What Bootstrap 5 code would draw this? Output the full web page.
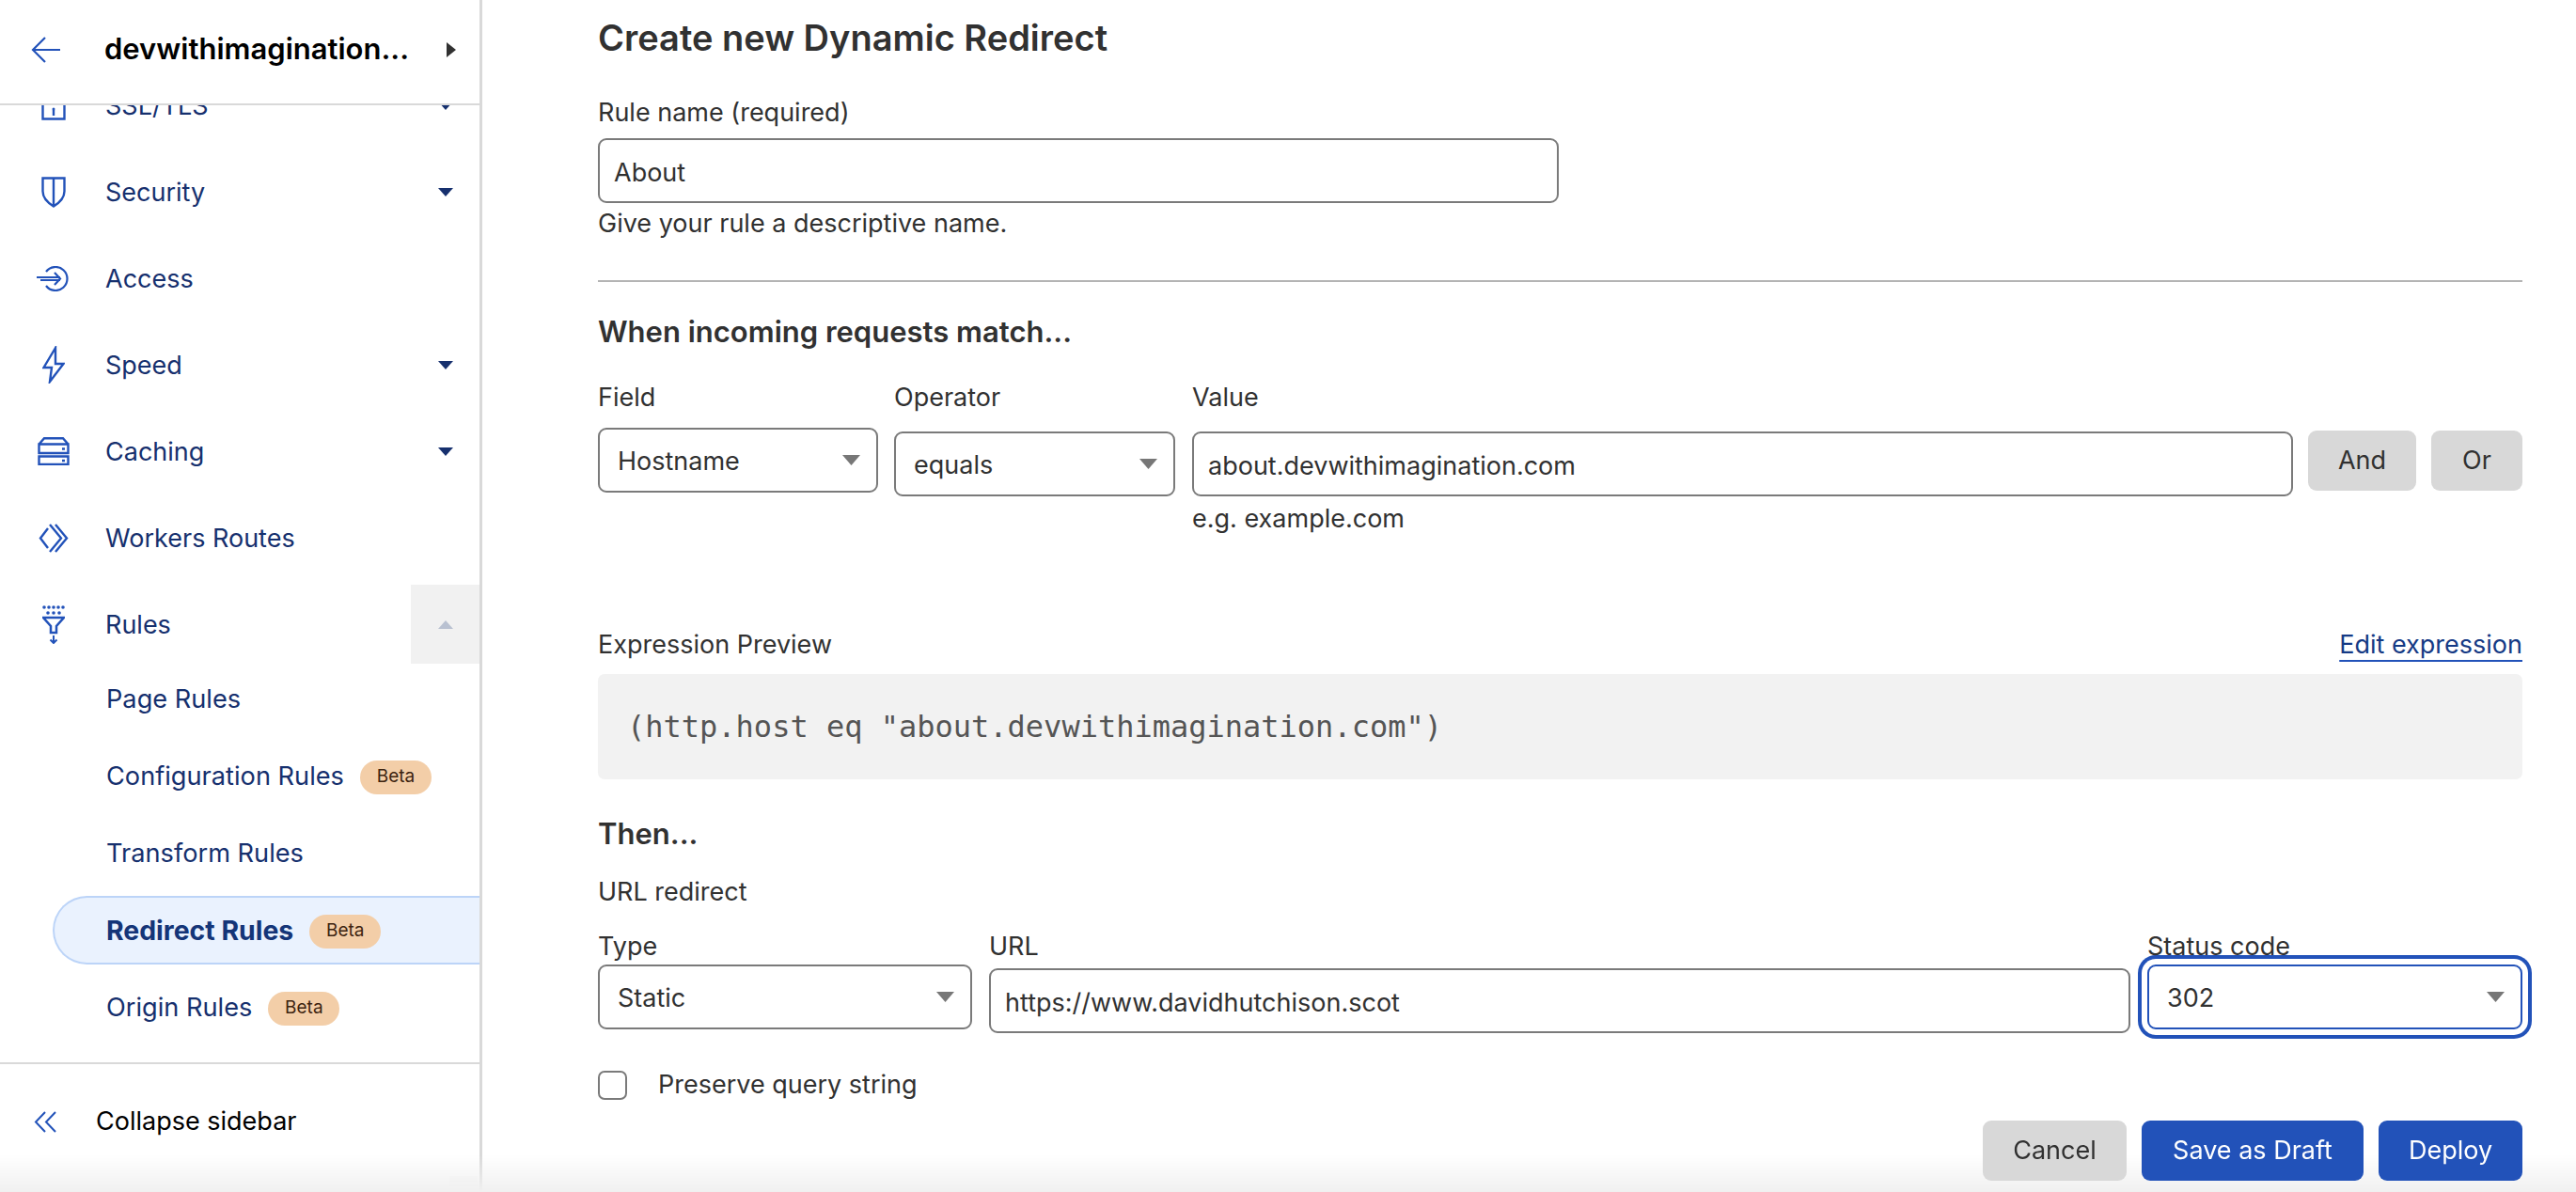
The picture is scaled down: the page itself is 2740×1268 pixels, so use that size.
<!DOCTYPE html>
<html lang="en">
<head>
    <meta charset="UTF-8">
    <title>Create new Dynamic Redirect</title>
    <link href="https://cdn.jsdelivr.net/npm/bootstrap@5.3.0/dist/css/bootstrap.min.css" rel="stylesheet">
    <style>
        html, body { height: 100%; }
        body {
            font-family: Inter, "Liberation Sans", sans-serif;
            font-size: 27px;
            color: #313131;
            overflow: hidden;
            background: #fff;
        }
        .app-shell { height: 100vh; }

        /* sidebar */
        .side-panel { width: 513px; flex: none; border-right: 3px solid #d9d9d9; height: 100%; position: relative; }
        .side-head { height: 112px; flex: none; border-bottom: 2px solid #d9d9d9; padding: 0 25px 5px 33px; background: #fff; }
        .side-title { font-size: 31px; font-weight: 600; color: #000; margin-left: 47px; width: 325px; white-space: nowrap; }
        .side-scroll { flex: 1 1 auto; overflow: hidden; min-height: 0; }
        .side-list { margin-top: -42px; gap: 8px; }
        .side-item { height: 84px; color: #16306e; text-decoration: none; }
        .side-text { padding-top: 2px; }
        .side-ico { width: 112px; flex: none; display: flex; justify-content: center; padding-left: 2px; }
        .side-ico svg { display: block; }
        .side-toggle { width: 73px; height: 84px; margin-left: auto; flex: none; display: flex; align-items: center; justify-content: center; }
        .side-toggle.is-open { background: #f1f1f1; }
        .tri-down { width: 0; height: 0; border-left: 8px solid transparent; border-right: 8px solid transparent; border-top: 9px solid #16306e; }
        .tri-up { width: 0; height: 0; border-left: 8px solid transparent; border-right: 8px solid transparent; border-bottom: 9px solid #b9c1d1; }
        .tri-right { width: 0; height: 0; border-top: 8px solid transparent; border-bottom: 8px solid transparent; border-left: 10px solid #313131; margin-left: auto; }
        .sub-list { gap: 9px; margin-top: -7px; }
        .sub-item { height: 73px; margin-left: 56px; padding: 2px 0 0 55px; font-size: 27.2px; color: #16306e; text-decoration: none; border: 2px solid transparent; border-right: 0; }
        .sub-item.is-active { background: #eaf2fe; border-color: #bcd4f8; border-radius: 37px 0 0 37px; font-weight: 700; font-size: 28.4px; color: #143578; }
        .beta-tag { background: #f3cea8; color: #3d2410; font-size: 19px; font-weight: 400; border-radius: 18px; width: 76px; height: 36px; margin-left: 17px; }
        .side-foot { height: 138px; flex: none; border-top: 2px solid #d9d9d9; padding-left: 36px; padding-bottom: 14px; color: #000; }
        .side-foot span { margin-left: 42px; }
        .grip-patch { position: absolute; right: 2px; bottom: 0; width: 30px; height: 17px; background: rgba(0,0,0,.025); }

        /* main form */
        .main-pane { flex: 1 1 auto; min-width: 0; padding: 0 57px 0 123px; }
        .page-title { font-size: 38px; font-weight: 600; line-height: 46px; margin: 17px 0 0; color: #313131; }
        .fld-label { display: block; line-height: 34px; margin: 0; }
        .fld-note { line-height: 34px; }
        .rf-input.form-control, .rf-select.form-select {
            height: 69px; font-size: 27px; color: #313131; border: 2px solid #7a7a7a; border-radius: 9px;
            padding: 3px 15px 0; font-family: inherit; box-shadow: none;
        }
        .rf-select.form-select {
            padding-left: 19px;
            background-image: url("data:image/svg+xml,%3Csvg xmlns='http://www.w3.org/2000/svg' width='19' height='11'%3E%3Cpath d='M0 0h19L9.500 11z' fill='%23777'/%3E%3C/svg%3E");
            background-position: right 17px top 27px;
            background-size: 19px 11px;
        }
        .rf-select.is-focused { border-color: #2252b9; box-shadow: 0 0 0 6px #fff, 0 0 0 10px #2252b9; }
        .form-rule { border: 0; border-top: 2px solid #b4b4b4; opacity: 1; margin: 43px 0 0; }
        .sec-title { font-size: 31px; font-weight: 600; line-height: 40px; margin: 0; color: #313131; }
        .rf-btn { height: 64px; font-size: 27px; border: 0; border-radius: 9px; padding: 0; }
        .rf-btn-grey, .rf-btn-grey:hover { background: #d8d8d8; color: #313131; }
        .rf-btn-blue, .rf-btn-blue:hover { background: #2252b9; color: #fff; }
        .edit-link { color: #153a85; text-decoration: underline; text-decoration-color: #2252b9; text-underline-offset: 7px; text-decoration-thickness: 2px; }
        .expr-box { background: #f2f2f2; border-radius: 7px; height: 112px; margin-top: 14px; padding-left: 31px; font-family: "DejaVu Sans Mono", "Liberation Mono", monospace; font-size: 32px; color: #555; }
        .rf-check.form-check-input { width: 31px; height: 31px; margin: 0; border: 2px solid #7a7a7a; border-radius: 7px; flex: none; }
        .check-text { margin: 0 0 0 33px; line-height: 34px; }

        .rule-input { width: 1022px; margin-top: 10px; }
        .label-first { margin-top: 40px; }
        .note-first { margin-top: 5px; }
        .when-title { margin-top: 33px; }
        .match-row { margin-top: 33px; }
        .w-field { width: 298px; }
        .w-oper { width: 299px; margin-left: 17px; }
        .w-value { width: 1171px; margin-left: 18px; }
        .w-and { width: 115px; }
        .w-or { width: 97px; }
        .w-type { width: 398px; }
        .w-url { width: 1214px; }
        .w-status { width: 399px; }
        .drop-field { margin-top: 15px; }
        .drop-value { margin-top: 19px; }
        .drop-type { margin-top: 2px; }
        .drop-url { margin-top: 6px; }
        .hint-line { margin-top: 7px; }
        .btn-pair { padding-top: 52px; }
        .expr-head { margin-top: 100px; }
        .then-title { margin-top: 38px; }
        .url-note { margin-top: 25px; }
        .type-row { margin-top: 24px; }
        .check-row { margin-top: 38px; }
        .foot-row { margin-top: 21px; position: relative; z-index: 2; }
        .w-cancel, .w-deploy { width: 153px; }
        .w-draft { width: 236px; }

        .bottom-fade { position: fixed; left: 0; right: 0; bottom: 0; height: 40px; z-index: 1; background: linear-gradient(to bottom, rgba(240,240,240,0), rgba(240,240,240,1)); pointer-events: none; }
    </style>
</head>
<body>
    <div class="app-shell d-flex">
        <nav class="side-panel d-flex flex-column">
            <div class="side-head d-flex align-items-center">
                <svg width="31" height="28" viewBox="0 0 31 28" fill="none" stroke="#2252b9" stroke-width="2.200"><path d="M15 1 2 14l13 13M2 14h29"/></svg>
                <div class="side-title">devwithimagination...</div>
                <div class="tri-right"></div>
            </div>
            <div class="side-scroll">
                <div class="side-list d-flex flex-column">
                    <a class="side-item d-flex align-items-center" href="#">
                        <span class="side-ico"><svg width="26" height="32" viewBox="0 0 26 32" fill="none" stroke="#2252b9" stroke-width="2.400"><path d="M6 8V6a7 7 0 0 1 14 0v2M1.500 8h23v22.500h-23z"/><path d="M13 21v6"/><circle cx="13" cy="20" r="1.500" fill="#2252b9" stroke="none"/></svg></span>
                        <span class="side-text">SSL/TLS</span>
                        <span class="side-toggle"><span class="tri-down"></span></span>
                    </a>
                    <a class="side-item d-flex align-items-center" href="#">
                        <span class="side-ico"><svg width="26" height="33" viewBox="0 0 26 33" fill="none" stroke="#2252b9" stroke-width="2.400"><path d="M1.500 1.500h23v14c0 7-5 12-11.500 16-6.500-4-11.500-9-11.500-16zM13 1.500v30"/></svg></span>
                        <span class="side-text">Security</span>
                        <span class="side-toggle"><span class="tri-down"></span></span>
                    </a>
                    <a class="side-item d-flex align-items-center" href="#">
                        <span class="side-ico"><svg width="37" height="27" viewBox="0 0 37 27" fill="none" stroke="#2252b9" stroke-width="2.200"><path d="M10 6a12.500 12.500 0 1 1 0 15M0 12h25M4 15h21M19 7l6 6.500-6 6.500"/></svg></span>
                        <span class="side-text">Access</span>
                    </a>
                    <a class="side-item d-flex align-items-center" href="#">
                        <span class="side-ico"><svg width="24" height="40" viewBox="0 0 24 40" fill="none" stroke="#2252b9" stroke-width="2.400"><path d="M14 2 1.500 23H10L8 38l14.500-19H14z"/></svg></span>
                        <span class="side-text">Speed</span>
                        <span class="side-toggle"><span class="tri-down"></span></span>
                    </a>
                    <a class="side-item d-flex align-items-center" href="#">
                        <span class="side-ico"><svg width="34" height="30" viewBox="0 0 34 30" fill="none" stroke="#2252b9" stroke-width="2.400"><path d="M1.500 7.500 7 1.200h20l5.500 6.300M1.500 7.500h31v9.500h-31zM1.500 20.500h31v8.500h-31z"/><path d="M26 12.500h3M26 25h3"/></svg></span>
                        <span class="side-text">Caching</span>
                        <span class="side-toggle"><span class="tri-down"></span></span>
                    </a>
                    <a class="side-item d-flex align-items-center" href="#">
                        <span class="side-ico"><svg width="32" height="31" viewBox="0 0 32 31" fill="none" stroke="#2252b9" stroke-width="2.400"><path d="M10 5 2 15.500 10 26M12 1l12 14.500L12 30M18 1l12 14.500L18 30"/></svg></span>
                        <span class="side-text">Workers Routes</span>
                    </a>
                    <a class="side-item d-flex align-items-center" href="#">
                        <span class="side-ico"><svg width="24" height="41" viewBox="0 0 24 41" fill="none" stroke="#2252b9" stroke-width="2.500"><path d="M1 13h22l-8 9v7H9v-7z"/><path d="M12 32v8M8.500 36.500l3.500 3.500 3.500-3.500" stroke-width="2"/><g fill="#2252b9" stroke="none"><circle cx="2" cy="2" r="1.800"/><circle cx="7" cy="2" r="1.800"/><circle cx="12" cy="2" r="1.800"/><circle cx="17" cy="2" r="1.800"/><circle cx="22" cy="2" r="1.800"/><circle cx="6" cy="8" r="1.800"/><circle cx="12" cy="8" r="1.800"/><circle cx="18" cy="8" r="1.800"/></g></svg></span>
                        <span class="side-text">Rules</span>
                        <span class="side-toggle is-open"><span class="tri-up"></span></span>
                    </a>
                    <div class="sub-list d-flex flex-column">
                        <a class="sub-item d-flex align-items-center" href="#">Page Rules</a>
                        <a class="sub-item d-flex align-items-center" href="#">Configuration Rules<span class="beta-tag d-flex align-items-center justify-content-center">Beta</span></a>
                        <a class="sub-item d-flex align-items-center" href="#">Transform Rules</a>
                        <a class="sub-item is-active d-flex align-items-center" href="#">Redirect Rules<span class="beta-tag d-flex align-items-center justify-content-center">Beta</span></a>
                        <a class="sub-item d-flex align-items-center" href="#">Origin Rules<span class="beta-tag d-flex align-items-center justify-content-center">Beta</span></a>
                    </div>
                </div>
            </div>
            <div class="side-foot d-flex align-items-center">
                <svg width="24" height="23" viewBox="0 0 24 23" fill="none" stroke="#2252b9" stroke-width="2"><path d="M12 1 2 11.500 12 22M23 1 13 11.500 23 22"/></svg>
                <span>Collapse sidebar</span>
            </div>
            <div class="grip-patch"></div>
        </nav>

        <main class="main-pane">
            <h1 class="page-title">Create new Dynamic Redirect</h1>
            <label class="fld-label label-first">Rule name (required)</label>
            <input class="form-control rf-input rule-input" value="About">
            <div class="fld-note note-first">Give your rule a descriptive name.</div>
            <hr class="form-rule">
            <h2 class="sec-title when-title">When incoming requests match...</h2>

            <div class="d-flex match-row">
                <div class="w-field">
                    <label class="fld-label">Field</label>
                    <select class="form-select rf-select drop-field"><option>Hostname</option></select>
                </div>
                <div class="w-oper">
                    <label class="fld-label">Operator</label>
                    <select class="form-select rf-select drop-value"><option>equals</option></select>
                </div>
                <div class="w-value">
                    <label class="fld-label">Value</label>
                    <input class="form-control rf-input drop-value" value="about.devwithimagination.com">
                    <div class="fld-note hint-line">e.g. example.com</div>
                </div>
                <div class="d-flex gap-3 ms-auto btn-pair">
                    <button class="btn rf-btn rf-btn-grey w-and">And</button>
                    <button class="btn rf-btn rf-btn-grey w-or">Or</button>
                </div>
            </div>

            <div class="d-flex justify-content-between expr-head">
                <span class="fld-note">Expression Preview</span>
                <a class="edit-link fld-note" href="#">Edit expression</a>
            </div>
            <div class="expr-box d-flex align-items-center">(http.host eq "about.devwithimagination.com")</div>

            <h2 class="sec-title then-title">Then...</h2>
            <div class="fld-note url-note">URL redirect</div>
            <div class="d-flex justify-content-between type-row">
                <div class="w-type">
                    <label class="fld-label">Type</label>
                    <select class="form-select rf-select drop-type"><option>Static</option></select>
                </div>
                <div class="w-url">
                    <label class="fld-label">URL</label>
                    <input class="form-control rf-input drop-url" value="https://www.davidhutchison.scot">
                </div>
                <div class="w-status">
                    <label class="fld-label">Status code</label>
                    <select class="form-select rf-select is-focused drop-type"><option>302</option></select>
                </div>
            </div>

            <div class="d-flex align-items-center check-row">
                <input class="form-check-input rf-check" type="checkbox" id="keepQuery">
                <label class="check-text" for="keepQuery">Preserve query string</label>
            </div>

            <div class="d-flex justify-content-end gap-3 foot-row">
                <button class="btn rf-btn rf-btn-grey w-cancel">Cancel</button>
                <button class="btn rf-btn rf-btn-blue w-draft">Save as Draft</button>
                <button class="btn rf-btn rf-btn-blue w-deploy">Deploy</button>
            </div>
        </main>
    </div>
    <div class="bottom-fade"></div>
</body>
</html>
